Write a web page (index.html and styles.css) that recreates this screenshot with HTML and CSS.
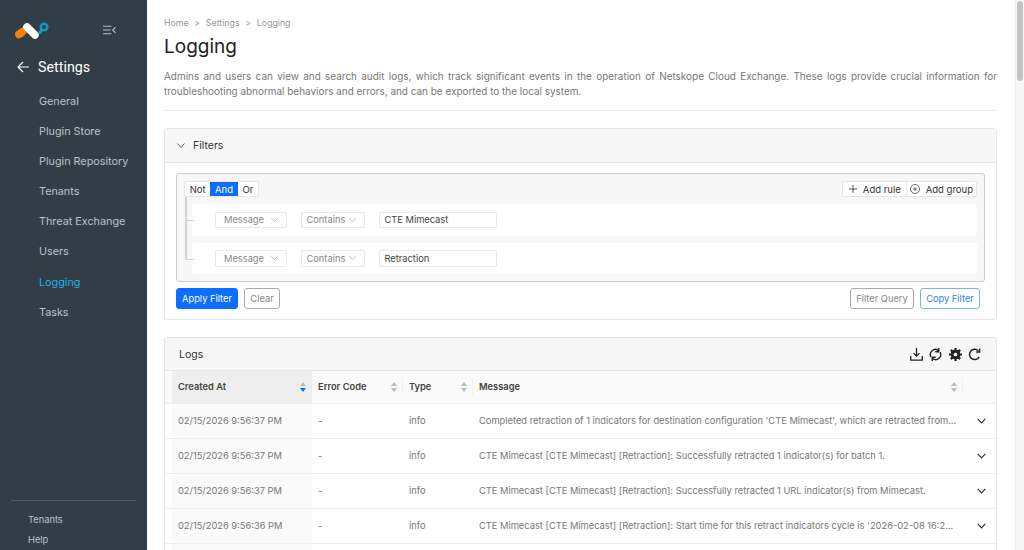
FILE: index.html
```html
<!DOCTYPE html>
<html lang="en">

<head>
  <meta charset="UTF-8">
  <meta name="viewport" content="width=device-width, initial-scale=1.0">
  <title>Logging</title>
  <link rel="stylesheet" href="styles.css">
</head>

<body>
  <div class="app">
    <aside class="sidebar">
      <div class="brand">
        <svg class="logo" width="36" height="24" viewBox="0 0 36 24">
          <path d="M1 14Q3 11 10 7.500L13 13Q10 18 5 19.500Q1 19.500 1 14Z" fill="#f58210" />
          <path d="M13 8L21 16" stroke="#fff" stroke-width="7.500" stroke-linecap="round" />
          <path d="M25 14.500L28.500 10" stroke="#0e9ac4" stroke-width="3.500" />
          <circle cx="30" cy="8" r="3.300" fill="none" stroke="#0e9ac4" stroke-width="2.500" />
        </svg>
        <svg class="collapse" width="13" height="10" viewBox="0 0 14 10" fill="none" stroke="#b4bcc2" stroke-width="1.200">
          <path d="M0 1H9M0 5H8M0 9H9M13.500 2L10.500 5L13.500 8" />
        </svg>
      </div>
      <div class="back">
        <svg width="12" height="12" viewBox="0 0 12 12" fill="none" stroke="#fff" stroke-width="1.200">
          <path d="M12 6H1M6 1L1 6L6 11" />
        </svg>
        <span>Settings</span>
      </div>
      <nav class="menu">
        <a>General</a>
        <a>Plugin Store</a>
        <a>Plugin Repository</a>
        <a>Tenants</a>
        <a>Threat Exchange</a>
        <a>Users</a>
        <a class="active">Logging</a>
        <a>Tasks</a>
      </nav>
      <div class="side-foot">
        <a>Tenants</a>
        <a>Help</a>
      </div>
    </aside>

    <main class="content">
      <div class="crumbs"><span>Home</span><span>&gt;</span><span>Settings</span><span>&gt;</span><span>Logging</span></div>
      <h1>Logging</h1>
      <p class="intro">Admins and users can view and search audit logs, which track significant events in the operation of Netskope Cloud Exchange. These logs provide crucial information for troubleshooting abnormal behaviors and errors, and can be exported to the local system.</p>

      <section class="card">
        <div class="card-head filters-head">
          <svg width="8" height="5" viewBox="0 0 8 5" fill="none" stroke="#555" stroke-width=".9"><path d="M.5 .5L4 4.500L7.500 .5" /></svg>
          <span>Filters</span>
        </div>
        <div class="filters-body">
          <div class="builder">
            <div class="builder-top">
              <div class="btn-group">
                <span>Not</span><span class="on">And</span><span>Or</span>
              </div>
              <div class="btn-group adds">
                <span>
                  <svg width="8" height="8" viewBox="0 0 8 8" stroke="#444" stroke-width=".9"><path d="M4 0V8M0 4H8" /></svg>
                  Add rule
                </span>
                <span>
                  <svg width="10" height="10" viewBox="0 0 10 10" fill="none" stroke="#444" stroke-width=".8"><circle cx="5" cy="5" r="4.500" /><path d="M5 3V7M3 5H7" /></svg>
                  Add group
                </span>
              </div>
            </div>
            <div class="rules">
              <div class="rule">
                <span class="sel sel-field">Message <svg width="7" height="4" viewBox="0 0 7 4" fill="none" stroke="#aaa" stroke-width=".7"><path d="M.3 .3L3.500 3.500L6.700 .3" /></svg></span>
                <span class="sel sel-op">Contains <svg width="7" height="4" viewBox="0 0 7 4" fill="none" stroke="#aaa" stroke-width=".7"><path d="M.3 .3L3.500 3.500L6.700 .3" /></svg></span>
                <span class="val">CTE Mimecast</span>
              </div>
              <div class="rule">
                <span class="sel sel-field">Message <svg width="7" height="4" viewBox="0 0 7 4" fill="none" stroke="#aaa" stroke-width=".7"><path d="M.3 .3L3.500 3.500L6.700 .3" /></svg></span>
                <span class="sel sel-op">Contains <svg width="7" height="4" viewBox="0 0 7 4" fill="none" stroke="#aaa" stroke-width=".7"><path d="M.3 .3L3.500 3.500L6.700 .3" /></svg></span>
                <span class="val">Retraction</span>
              </div>
            </div>
          </div>
          <div class="filter-actions">
            <button class="btn primary">Apply Filter</button>
            <button class="btn grey clear">Clear</button>
            <button class="btn grey query">Filter Query</button>
            <button class="btn outline">Copy Filter</button>
          </div>
        </div>
      </section>

      <section class="card logs">
        <div class="card-head logs-head">
          <span>Logs</span>
          <div class="tools">
            <svg width="13" height="13" viewBox="0 0 14 14" fill="none" stroke="#222" stroke-width="1.400"><path d="M7 0V8.500M3.800 5.500L7 8.800L10.200 5.500M.8 8.500V13H13.200V8.500" /></svg>
            <svg width="13" height="13" viewBox="0 0 14 14" fill="none" stroke="#222" stroke-width="1.500"><path d="M2 9.500A5.500 5.500 0 0 1 10 2.500M12 4.500A5.500 5.500 0 0 1 4 11.500" /><path d="M10.500 0V4H6.800M3.500 14V10H7.200" /></svg>
            <svg width="13" height="13" viewBox="0 0 14 14"><circle cx="7" cy="7" r="3.800" fill="none" stroke="#222" stroke-width="2.800" /><path d="M7 0V14M0 7H14M2 2L12 12M12 2L2 12" stroke="#222" stroke-width="2.400" /><circle cx="7" cy="7" r="2" fill="#f7f7f7" /></svg>
            <svg width="13" height="13" viewBox="0 0 14 14" fill="none" stroke="#222" stroke-width="1.600"><path d="M12 9.500A5.500 5.500 0 1 1 11 3" /><path d="M12.500 .5V4.200H8.800" /></svg>
          </div>
        </div>
        <table class="log-table">
          <thead>
            <tr>
              <th class="col-gap"></th>
              <th class="col-date sorted">Created At<i class="sort down"></i></th>
              <th class="col-code">Error Code<i class="sort"></i></th>
              <th class="col-type">Type<i class="sort"></i></th>
              <th class="col-msg">Message<i class="sort"></i></th>
              <th class="col-more"></th>
            </tr>
          </thead>
          <tbody>
            <tr>
              <td></td>
              <td class="sorted">02/15/2026 9:56:37 PM</td>
              <td>-</td>
              <td>info</td>
              <td>Completed retraction of 1 indicators for destination configuration 'CTE Mimecast', which are retracted from...</td>
              <td class="more"><svg width="9" height="6" viewBox="0 0 9 6" fill="none" stroke="#333" stroke-width="1.200"><path d="M.7 .8L4.500 4.800L8.300 .8" /></svg></td>
            </tr>
            <tr>
              <td></td>
              <td class="sorted">02/15/2026 9:56:37 PM</td>
              <td>-</td>
              <td>info</td>
              <td>CTE Mimecast [CTE Mimecast] [Retraction]: Successfully retracted 1 indicator(s) for batch 1.</td>
              <td class="more"><svg width="9" height="6" viewBox="0 0 9 6" fill="none" stroke="#333" stroke-width="1.200"><path d="M.7 .8L4.500 4.800L8.300 .8" /></svg></td>
            </tr>
            <tr>
              <td></td>
              <td class="sorted">02/15/2026 9:56:37 PM</td>
              <td>-</td>
              <td>info</td>
              <td>CTE Mimecast [CTE Mimecast] [Retraction]: Successfully retracted 1 URL indicator(s) from Mimecast.</td>
              <td class="more"><svg width="9" height="6" viewBox="0 0 9 6" fill="none" stroke="#333" stroke-width="1.200"><path d="M.7 .8L4.500 4.800L8.300 .8" /></svg></td>
            </tr>
            <tr>
              <td></td>
              <td class="sorted">02/15/2026 9:56:36 PM</td>
              <td>-</td>
              <td>info</td>
              <td>CTE Mimecast [CTE Mimecast] [Retraction]: Start time for this retract indicators cycle is '2026-02-08 16:2...</td>
              <td class="more"><svg width="9" height="6" viewBox="0 0 9 6" fill="none" stroke="#333" stroke-width="1.200"><path d="M.7 .8L4.500 4.800L8.300 .8" /></svg></td>
            </tr>
            <tr>
              <td></td>
              <td class="sorted"></td>
              <td></td>
              <td></td>
              <td></td>
              <td></td>
            </tr>
          </tbody>
        </table>
      </section>
    </main>

    <div class="scrollbar"><div class="thumb"></div></div>
  </div>
</body>

</html>
```

FILE: styles.css
```css
* {
  box-sizing: border-box;
}

html,
body {
  margin: 0;
  height: 100%;
  overflow: hidden;
}

body {
  font-family: Inter, "Liberation Sans", sans-serif;
  color: #333;
  background-color: #fff;
}

.app {
  display: flex;
  height: 550px;
}

/* sidebar */
.sidebar {
  width: 147px;
  flex-shrink: 0;
  display: flex;
  flex-direction: column;
  background-color: #313e48;
  color: #bcc2c6;
}

.brand {
  display: flex;
  align-items: center;
  justify-content: space-between;
  height: 24px;
  margin-top: 19px;
  padding: 0 31px 0 14px;
}

.collapse {
  margin-bottom: 2px;
}

.back {
  display: flex;
  align-items: center;
  gap: 9px;
  margin-top: 12px;
  padding-left: 17px;
  height: 24px;
  font-family: Roboto, sans-serif;
  font-size: 14.300px;
  color: #fff;
}

.menu {
  display: flex;
  flex-direction: column;
  margin-top: 8px;
  font-size: 10.800px;
}

.menu a {
  height: 30.100px;
  line-height: 30px;
  padding-left: 39px;
}

.menu .active {
  color: #19b3e6;
}

.side-foot {
  margin: auto 11px 0;
  padding: 9px 0 0 17px;
  border-top: 1px solid #4d5a63;
  font-size: 9.300px;
}

.side-foot a {
  display: block;
  height: 20px;
  line-height: 20px;
}

/* main area */
.content {
  flex: 1;
  min-width: 0;
  height: 550px;
  overflow: hidden;
  padding: 17px 18px 0 17px;
}

.crumbs {
  display: flex;
  gap: 5.700px;
  font-size: 8.800px;
  line-height: 12px;
  color: #999;
}

h1 {
  margin: 4px 0 0;
  font-size: 19px;
  font-weight: 400;
  line-height: 28px;
  color: #222;
}

.intro {
  margin: 8px 0 0;
  padding-bottom: 11px;
  border-bottom: 1px solid #e8e8e8;
  font-size: 9.950px;
  line-height: 15px;
  color: #777;
  text-align: justify;
}

.card {
  margin-top: 16.500px;
  border: 1px solid #e5e5e5;
  border-radius: 3px;
}

.card-head {
  display: flex;
  align-items: center;
  background-color: #f7f7f7;
  border-bottom: 1px solid #e5e5e5;
  font-size: 10.500px;
}

.filters-head {
  height: 34px;
  gap: 8px;
  padding-left: 12px;
}

.filters-body {
  padding: 10.500px 11px 10px;
}

.builder {
  padding: 7px;
  background-color: #f7f7f7;
  border: 1px solid #ccc;
  border-radius: 3px;
}

.builder-top {
  display: flex;
  justify-content: space-between;
}

.btn-group {
  display: flex;
  height: 16px;
  background-color: #fff;
  border: 1px solid #e6e6e6;
  border-radius: 2px;
  font-size: 9.500px;
  line-height: 15px;
}

.btn-group span {
  padding: 0 4.700px;
}

.btn-group .on {
  background-color: #0d6efd;
  color: #fff;
}

.adds span {
  display: flex;
  align-items: center;
  gap: 6px;
}

.adds span:first-child {
  padding: 0 5px 0 5.500px;
}

.adds span + span {
  border-left: 1px solid #e6e6e6;
  gap: 5.500px;
  padding: 0 3px 0 3.500px;
}

.rules {
  margin-top: 7px;
  padding-left: 8px;
  display: flex;
  flex-direction: column;
  gap: 7px;
}

.rule {
  position: relative;
  display: flex;
  align-items: center;
  gap: 13.500px;
  height: 31.500px;
  padding-left: 23px;
  background-color: #fff;
  border-radius: 3px;
  font-size: 9.300px;
}

/* tree lines beside the rules */
.rule::before {
  content: "";
  position: absolute;
  left: -7.500px;
  top: -7px;
  width: 7.500px;
  height: 23px;
  border-left: 2px solid #d4d4d4;
  border-bottom: 1px solid #d4d4d4;
}

.rule + .rule::before {
  top: -23px;
  height: 39px;
  border-bottom-left-radius: 2px;
}

.sel,
.val {
  display: flex;
  align-items: center;
  height: 16.500px;
  background-color: #fff;
  border: 1px solid #e8e8e8;
  border-radius: 2px;
}

.sel {
  justify-content: space-between;
  color: #888;
}

.sel-field {
  width: 72px;
  padding: 0 8px 0 8px;
}

.sel-op {
  width: 64.500px;
  padding: 0 8px 0 5px;
}

.val {
  width: 118px;
  padding: 0 5px;
  color: #444;
}

.filter-actions {
  display: flex;
  gap: 6px;
  margin-top: 6px;
  padding-right: 5px;
}

.btn {
  height: 21px;
  padding: 0;
  font-family: inherit;
  font-size: 9.300px;
  white-space: nowrap;
  border-radius: 3px;
  background-color: #fff;
}

.primary {
  width: 62px;
  background-color: #0d6efd;
  border: 1px solid #0d6efd;
  color: #fff;
}

.grey {
  border: 1px solid #a9a9a9;
  color: #888;
}

.clear {
  width: 36px;
}

.query {
  width: 64px;
  margin-left: auto;
}

.outline {
  width: 60px;
  border: 1px solid #7db0fb;
  color: #2f80f6;
}

/* logs table */
.logs {
  margin-top: 17px;
}

.logs-head {
  justify-content: space-between;
  height: 33px;
  padding: 0 15px 0 14px;
}

.tools {
  display: flex;
  gap: 6.500px;
}

.log-table {
  width: 100%;
  table-layout: fixed;
  border-collapse: collapse;
  font-size: 9.320px;
  color: #777;
}

.log-table th {
  position: relative;
  height: 32px;
  padding: 0 6px;
  background-color: #fafafa;
  color: #444;
  font-weight: 600;
  text-align: left;
  border-bottom: 1px solid #eee;
}

.log-table td {
  height: 35px;
  padding: 0 6px;
  border-bottom: 1px solid #eee;
  white-space: nowrap;
}

.log-table .col-gap {
  width: 7px;
  padding: 0;
}

.log-table td:first-child {
  padding: 0;
}

.col-date {
  width: 140px;
}

.col-code {
  width: 91px;
}

.col-type {
  width: 70px;
}

.col-more {
  width: 33px;
}

.log-table th.sorted {
  background-color: #eeeeee;
}

.log-table td.sorted {
  background-color: #fafafa;
}

.log-table .more {
  padding: 0 0 0 14px;
}

/* faint divider at the right of each header cell */
.log-table th:not(.col-gap):not(.col-more):not(.sorted)::after {
  content: "";
  position: absolute;
  right: 0;
  top: 8px;
  height: 16px;
  border-right: 1px solid #f0f0f0;
}

.sort {
  position: absolute;
  right: 5px;
  top: 11px;
  width: 7px;
  height: 10px;
}

.sort::before,
.sort::after {
  content: "";
  position: absolute;
  left: 0;
  border-left: 3.500px solid transparent;
  border-right: 3.500px solid transparent;
}

.sort::before {
  top: 0;
  border-bottom: 4px solid #bbb;
}

.sort::after {
  bottom: 0;
  border-top: 4px solid #bbb;
}

.sort.down::after {
  border-top-color: #0d6efd;
}

.scrollbar {
  width: 9px;
  flex-shrink: 0;
  background-color: #f7f7f7;
  border-left: 1px solid #eee;
}

.thumb {
  width: 6px;
  height: 80px;
  margin: 1px 0 0 1px;
  background-color: #c4c4c4;
  border-radius: 3px;
}
```
